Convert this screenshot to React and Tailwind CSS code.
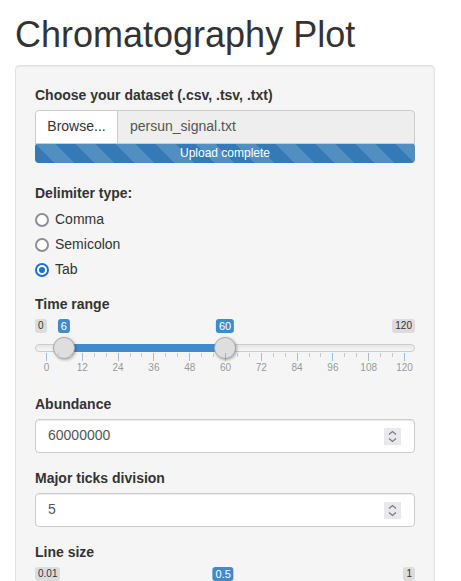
import React from 'react';

const TRACK = 358;

function Label({ children }) {
  return <label className="block text-[14px] leading-[20px] font-bold text-[#333] mb-[5px]">{children}</label>;
}

function Radio({ label, checked }) {
  return (
    <div className="flex items-center h-[20px]">
      {checked ? (
        <span className="w-[14px] h-[14px] rounded-full border-[2px] border-[#1a6fd8] bg-white flex items-center justify-center">
          <span className="w-[6px] h-[6px] rounded-full bg-[#1a6fd8]" />
        </span>
      ) : (
        <span className="w-[14px] h-[14px] rounded-full border-[2px] border-[#8e8e98] bg-white" />
      )}
      <span className="ml-[6px] text-[14px] text-[#333]">{label}</span>
    </div>
  );
}

function NumberInput({ value }) {
  return (
    <div className="relative h-[34px] w-full rounded-[4px] border border-[#ccc] bg-white shadow-[inset_0_1px_1px_rgba(0,0,0,0.075)] flex items-center">
      <span className="pl-[12px] text-[14px] text-[#555]">{value}</span>
      <span className="absolute right-[13px] top-[8px] w-[17px] h-[17px] bg-[#e9e9ed] flex items-center justify-center">
        <svg width="9" height="13" viewBox="0 0 9 13" fill="none" stroke="#7a7a7a" strokeWidth="1.2">
          <path d="M1 4.5 L4.5 1.5 L8 4.5" />
          <path d="M1 8.5 L4.5 11.5 L8 8.5" />
        </svg>
      </span>
    </div>
  );
}

function Slider({ min, max, from, to, ticks = [], minor = [] }) {
  const pos = (v) => 11 + ((v - min) / (max - min)) * TRACK;
  const single = to === undefined;
  const a = single ? pos(min) : pos(from);
  const b = single ? pos(from) : pos(to);
  const handles = single ? [from] : [from, to];
  return (
    <div className="relative h-[60px] w-full">
      <span className="absolute left-0 top-0 px-[3px] py-[1px] text-[10px] leading-[12px] text-[#333] bg-[rgba(0,0,0,0.1)] rounded-[3px]">{min}</span>
      <span className="absolute right-0 top-0 px-[3px] py-[1px] text-[10px] leading-[12px] text-[#333] bg-[rgba(0,0,0,0.1)] rounded-[3px]">{max}</span>
      {handles.map((v) => (
        <span key={'l' + v} className="absolute top-0 -translate-x-1/2 px-[3px] py-[1px] text-[11px] leading-[12px] text-white bg-[#428bca] rounded-[3px]" style={{ left: pos(v) }}>{v}</span>
      ))}
      <div className="absolute left-0 right-0 top-[25px] h-[8px] rounded-[16px] border border-[#ccc] bg-[linear-gradient(#ddd_-50%,white_150%)]" />
      <div className="absolute top-[25px] h-[8px] bg-[#428bca]" style={{ left: a, width: b - a }} />
      {handles.map((v) => (
        <span key={'h' + v} className="absolute top-[18px] w-[22px] h-[22px] -ml-[11px] rounded-full bg-[#dedede] border border-[#ababab] shadow-[1px_1px_3px_rgba(0,0,0,0.3)]" style={{ left: pos(v) }} />
      ))}
      {minor.map((v) => (
        <span key={'m' + v} className="absolute top-[34px] w-[1px] h-[4px] bg-[#c8c8c8]" style={{ left: pos(v) }} />
      ))}
      {ticks.map((v) => (
        <span key={'t' + v} className="absolute top-[34px] w-[1px] h-[8px] bg-[#428bca] opacity-50" style={{ left: pos(v) }} />
      ))}
      {ticks.map((v) => (
        <span key={'x' + v} className="absolute top-[43px] -translate-x-1/2 text-[10px] leading-[12px] text-[#999]" style={{ left: pos(v) + 0.5 }}>{v}</span>
      ))}
    </div>
  );
}

export default function App() {
  const ticks = [];
  const minor = [];
  for (let v = 0; v <= 120; v += 4) {
    if (v % 12 === 0) ticks.push(v);
    else minor.push(v);
  }

  return (
    <div className="min-h-screen bg-white px-[15px] font-['Liberation_Sans',Arial,sans-serif] text-[#333]">
      <h1 className="pt-[15px] mb-[10px] text-[36px] leading-[1.1] font-normal text-[#333]">Chromatography Plot</h1>

      <div className="w-[420px] rounded-[4px] border border-[#e3e3e3] bg-[#f5f5f5] p-[19px] shadow-[inset_0_1px_1px_rgba(0,0,0,0.05)]">
        <Label>Choose your dataset (.csv, .tsv, .txt)</Label>
        <div className="flex h-[34px]">
          <span className="w-[83px] flex items-center justify-center rounded-tl-[4px] border border-[#ccc] bg-white text-[14px] text-[#333]">Browse...</span>
          <span className="flex-1 flex items-center pl-[12px] -ml-[1px] rounded-tr-[4px] border border-[#ccc] bg-[#eee] text-[14px] text-[#555]">persun_signal.txt</span>
        </div>
        <div className="h-[20px] -mt-[1px] rounded-[4px] bg-[#337ab7] bg-[linear-gradient(45deg,rgba(255,255,255,.15)_25%,transparent_25%,transparent_50%,rgba(255,255,255,.15)_50%,rgba(255,255,255,.15)_75%,transparent_75%,transparent)] bg-[length:40px_40px] text-center text-[12px] leading-[20px] text-white">
          Upload complete
        </div>

        <div className="mt-[20px]">
          <Label>Delimiter type:</Label>
          <div className="flex flex-col gap-[5px] pt-[2px]">
            <Radio label="Comma" />
            <Radio label="Semicolon" />
            <Radio label="Tab" checked />
          </div>
        </div>

        <div className="mt-[14px]">
          <Label>Time range</Label>
          <Slider min={0} max={120} from={6} to={60} ticks={ticks} minor={minor} />
        </div>

        <div className="mt-[15px]">
          <Label>Abundance</Label>
          <NumberInput value="60000000" />
        </div>

        <div className="mt-[15px]">
          <Label>Major ticks division</Label>
          <NumberInput value="5" />
        </div>

        <div className="mt-[15px]">
          <Label>Line size</Label>
          <Slider min={0.01} max={1} from={0.5} />
        </div>
      </div>
    </div>
  );
}
